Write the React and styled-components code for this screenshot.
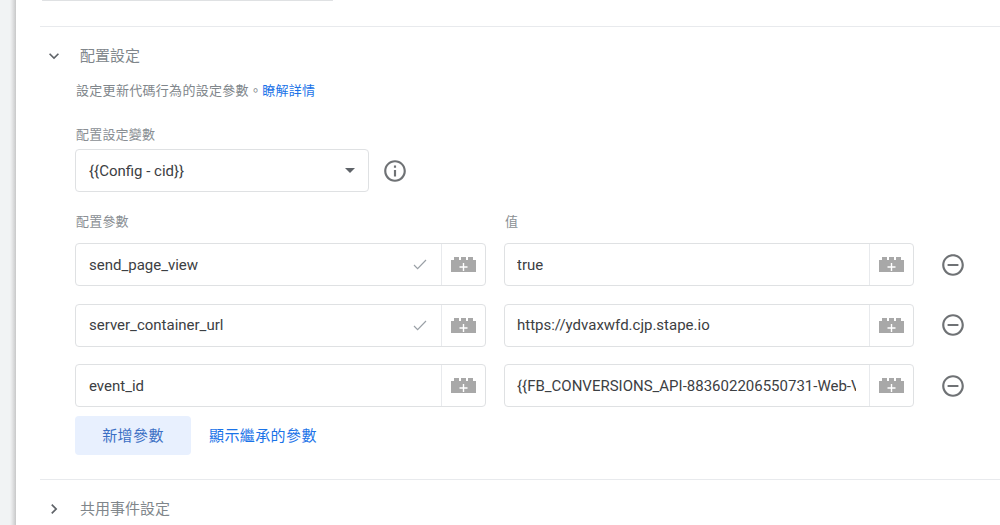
import React from "react";
import styled, { createGlobalStyle } from "styled-components";

const Global = createGlobalStyle`
  html, body { margin: 0; padding: 0; background: #fff; }
  body { width: 1000px; height: 525px; overflow: hidden; font-family: Roboto, "Noto Sans CJK TC", sans-serif; }
`;
const CJK = `Roboto, "Noto Sans CJK TC", sans-serif`;

const Page = styled.div`
  display: flex; width: 1000px; height: 525px; overflow: hidden; background: #fff;
`;
const Rail = styled.div`
  width: 16px; flex: none;
  background: linear-gradient(90deg, #f1f3f4 0, #f1f3f4 10px, #e6e7e8 12px, #cfd0d1 15px, #c8c8c8 16px);
`;
const Main = styled.main`
  flex: 1; min-width: 0; padding-left: 24px; display: flex; flex-direction: column;
`;
const ClippedField = styled.div`
  width: 291px; height: 2px; margin-left: 2px; box-sizing: border-box;
  border: 1px solid #dfe1e3; border-top: 0; border-radius: 0 0 4px 4px;
  display: flex; justify-content: flex-end;
  span { width: 42px; border-left: 1px solid #e8eaed; }
`;
const Section = styled.section`
  margin-top: ${p => p.$top}px;
  border-top: 1px solid #e8eaed;
`;
const SectionHead = styled.div`
  display: flex; align-items: center; height: 58px; padding-left: 4px;
  svg { flex: none; width: 20px; height: 20px; color: #5f6368; }
`;
const SectionTitle = styled.h3`
  margin: 0 0 0 16px; font: 400 15px/20px ${CJK}; color: #80868b;
`;
const Body = styled.div`
  padding-left: 35px; display: flex; flex-direction: column;
`;
const Help = styled.p`
  margin: -2px 0 0; padding-left: 1px; font: 400 13px/16px ${CJK}; color: #80868b; letter-spacing: 0.3px;
  a { color: #1a73e8; text-decoration: none; }
`;
const Label = styled.div`
  padding-left: 1px; font: 400 13px/16px ${CJK}; color: #8a8f94; letter-spacing: 0.2px;
`;
const SelectLabel = styled(Label)`margin-top: 28px;`;
const SelectRow = styled.div`
  display: flex; align-items: center; gap: 13px; margin-top: 6px;
`;
const Select = styled.div`
  width: 294px; height: 43px; box-sizing: border-box; border: 1px solid #dfe1e3; border-radius: 4px;
  display: flex; align-items: center; justify-content: space-between; padding: 0 13px;
  font: 400 15px/20px ${CJK}; color: #3c4043;
`;
const Caret = styled.i`
  width: 0; height: 0; border-left: 5px solid transparent; border-right: 5px solid transparent;
  border-top: 5px solid #5f6368;
`;
const IconHolder = styled.span`
  display: flex; color: #6f7275; flex: none;
  svg { display: block; }
`;
const HeadRow = styled.div`
  display: grid; grid-template-columns: 411px 410px; column-gap: 18px; margin-top: 22px;
`;
const Rows = styled.div`
  display: grid; grid-template-columns: 411px 410px 34px; column-gap: 18px; row-gap: 17.5px; margin-top: 13px; align-items: center;
`;
const Field = styled.div`
  height: 43px; box-sizing: border-box; border: 1px solid #dfe1e3; border-radius: 4px;
  display: flex; align-items: center;
`;
const FieldText = styled.div`
  flex: 1; min-width: 0; margin: 0 13px 0 ${p => p.$left}px; font: 400 15px/20px ${CJK}; color: #3c4043;
  white-space: nowrap; overflow: hidden;
`;
const Check = styled.span`
  display: flex; margin-right: 14px; color: #9aa0a6;
`;
const VarButton = styled.div`
  width: 44px; height: 100%; flex: none; border-left: 1px solid #e8eaed; box-sizing: border-box;
  display: flex; align-items: center; justify-content: center;
`;
const Remove = styled.span`
  display: flex; color: #6f7275; margin-left: 8px;
  svg { flex: none; }
`;
const Actions = styled.div`
  display: flex; align-items: center; gap: 18px; margin-top: 9px;
`;
const AddButton = styled.div`
  width: 116px; height: 39px; border-radius: 4px; background: #e8f0fe; color: #3b6fc4;
  display: flex; align-items: center; justify-content: center;
  font: 400 15px/20px ${CJK}; letter-spacing: 0.4px;
`;
const LinkAction = styled.a`
  font: 400 15px/20px ${CJK}; color: #1a73e8; letter-spacing: 0.4px; text-decoration: none;
`;

const ChevronDown = () => (
  <svg viewBox="0 0 24 24" fill="currentColor"><path d="M7.41 8.59 12 13.17l4.59-4.58L18 10l-6 6-6-6z" /></svg>
);
const ChevronRight = () => (
  <svg viewBox="0 0 24 24" fill="currentColor"><path d="M8.59 16.59 13.17 12 8.59 7.41 10 6l6 6-6 6z" /></svg>
);
const Info = () => (
  <svg width="26" height="26" viewBox="0 0 24 24" fill="currentColor">
    <path d="M11 7h2v2h-2zm0 4h2v6h-2zm1-9C6.48 2 2 6.48 2 12s4.48 10 10 10 10-4.48 10-10S17.52 2 12 2zm0 18c-4.41 0-8-3.59-8-8s3.59-8 8-8 8 3.59 8 8-3.59 8-8 8z" />
  </svg>
);
const Minus = () => (
  <svg width="26" height="26" viewBox="0 0 24 24" fill="currentColor">
    <path d="M7 11v2h10v-2H7zm5-9C6.48 2 2 6.48 2 12s4.48 10 10 10 10-4.48 10-10S17.52 2 12 2zm0 18c-4.41 0-8-3.59-8-8s3.59-8 8-8 8 3.59 8 8-3.59 8-8 8z" />
  </svg>
);
const Tick = () => (
  <svg width="14" height="11" viewBox="0 0 14 11" fill="none" stroke="currentColor" strokeWidth="1.2">
    <path d="M1 6l3.6 3.6L13 1" />
  </svg>
);
const Brick = () => (
  <svg width="25" height="15" viewBox="0 0 25 15">
    <path fill="#a8a8a8" d="M0 3h3V0h5v3h2V0h5v3h2V0h5v3h3v12H0z" />
    <path fill="#fff" d="M11.800 6h1.400v3.300h3.300v1.400h-3.300V14h-1.400v-3.300H8.500V9.300h3.300z" />
  </svg>
);

const params = [
  { name: "send_page_view", value: "true", check: true },
  { name: "server_container_url", value: "https://ydvaxwfd.cjp.stape.io", check: true },
  { name: "event_id", value: "{{FB_CONVERSIONS_API-883602206550731-Web-Visitor}}", check: false },
];

export default function App() {
  return (
    <Page>
      <Global />
      <Rail />
      <Main>
        <ClippedField><span /></ClippedField>
        <Section $top={25}>
          <SectionHead>
            <ChevronDown />
            <SectionTitle>配置設定</SectionTitle>
          </SectionHead>
          <Body>
            <Help>設定更新代碼行為的設定參數。<a href="#a">瞭解詳情</a></Help>
            <SelectLabel>配置設定變數</SelectLabel>
            <SelectRow>
              <Select>{"{{Config - cid}}"}<Caret /></Select>
              <IconHolder><Info /></IconHolder>
            </SelectRow>
            <HeadRow>
              <Label>配置參數</Label>
              <Label>值</Label>
            </HeadRow>
            <Rows>
              {params.map(p => (
                <React.Fragment key={p.name}>
                  <Field>
                    <FieldText $left={13}>{p.name}</FieldText>
                    {p.check && <Check><Tick /></Check>}
                    <VarButton><Brick /></VarButton>
                  </Field>
                  <Field>
                    <FieldText $left={12}>{p.value}</FieldText>
                    <VarButton><Brick /></VarButton>
                  </Field>
                  <Remove><Minus /></Remove>
                </React.Fragment>
              ))}
            </Rows>
            <Actions>
              <AddButton>新增參數</AddButton>
              <LinkAction href="#b">顯示繼承的參數</LinkAction>
            </Actions>
          </Body>
        </Section>
        <Section $top={24}>
          <SectionHead>
            <ChevronRight />
            <SectionTitle>共用事件設定</SectionTitle>
          </SectionHead>
        </Section>
      </Main>
    </Page>
  );
}
